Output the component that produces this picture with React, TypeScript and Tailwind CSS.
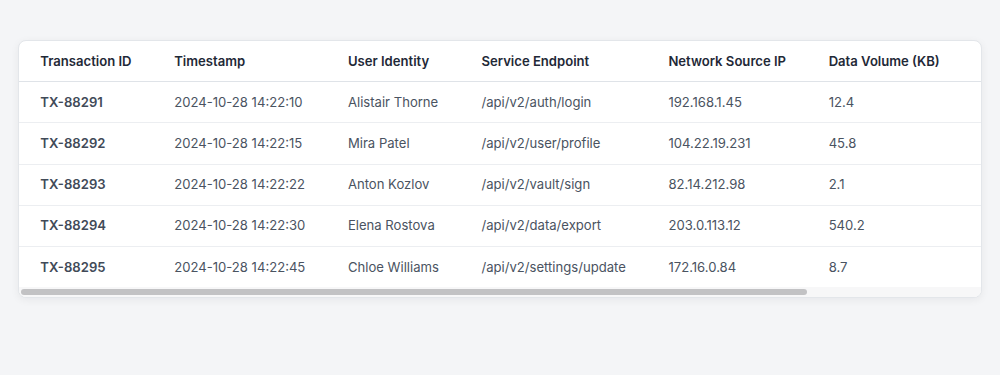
import React from 'react';

interface LogRow {
  id: string;
  timestamp: string;
  user: string;
  endpoint: string;
  ip: string;
  volume: string;
}

const rows: LogRow[] = [
  { id: 'TX-88291', timestamp: '2024-10-28 14:22:10', user: 'Alistair Thorne', endpoint: '/api/v2/auth/login', ip: '192.168.1.45', volume: '12.4' },
  { id: 'TX-88292', timestamp: '2024-10-28 14:22:15', user: 'Mira Patel', endpoint: '/api/v2/user/profile', ip: '104.22.19.231', volume: '45.8' },
  { id: 'TX-88293', timestamp: '2024-10-28 14:22:22', user: 'Anton Kozlov', endpoint: '/api/v2/vault/sign', ip: '82.14.212.98', volume: '2.1' },
  { id: 'TX-88294', timestamp: '2024-10-28 14:22:30', user: 'Elena Rostova', endpoint: '/api/v2/data/export', ip: '203.0.113.12', volume: '540.2' },
  { id: 'TX-88295', timestamp: '2024-10-28 14:22:45', user: 'Chloe Williams', endpoint: '/api/v2/settings/update', ip: '172.16.0.84', volume: '8.7' },
];

const headers = ['Transaction ID', 'Timestamp', 'User Identity', 'Service Endpoint', 'Network Source IP', 'Data Volume (KB)'];

const cell = 'px-[21.3px] py-[9.6px] leading-[21px]';

export default function App() {
  return (
    <div
      className="min-h-[375px] bg-[#f4f5f7] px-[18px] pt-10 pb-10"
      style={{ fontFamily: 'Inter, "Noto Sans", sans-serif' }}
    >
      <div className="rounded-lg border border-[#e3e6ea] bg-white shadow-[0_2px_8px_rgba(15,23,42,0.06)] overflow-hidden">
        <div className="overflow-hidden">
          <table className="w-max border-collapse text-left text-[13.1px] whitespace-nowrap">
            <thead>
              <tr className="border-b border-[#dfe3e8]">
                {headers.map((h) => (
                  <th key={h} className={`${cell} font-semibold text-[#1f2937]`}>
                    {h}
                  </th>
                ))}
                <th className="min-w-[232px]" />
              </tr>
            </thead>
            <tbody>
              {rows.map((r) => (
                <tr key={r.id} className="border-b border-[#eceef1] last:border-b-0">
                  <td className={`${cell} font-semibold text-[#414a58]`}>{r.id}</td>
                  <td className={`${cell} text-[#4a5361]`}>{r.timestamp}</td>
                  <td className={`${cell} text-[#4a5361]`}>{r.user}</td>
                  <td className={`${cell} text-[#4a5361]`}>{r.endpoint}</td>
                  <td className={`${cell} text-[#4a5361]`}>{r.ip}</td>
                  <td className={`${cell} text-[#4a5361]`}>{r.volume}</td>
                  <td />
                </tr>
              ))}
            </tbody>
          </table>
        </div>
        {/* horizontal scrollbar */}
        <div className="h-[10px] bg-[#f7f7f8] px-[2px] pt-[2px]">
          <div className="h-[6px] w-[786px] rounded-full bg-[#c2c2c4]" />
        </div>
      </div>
    </div>
  );
}
